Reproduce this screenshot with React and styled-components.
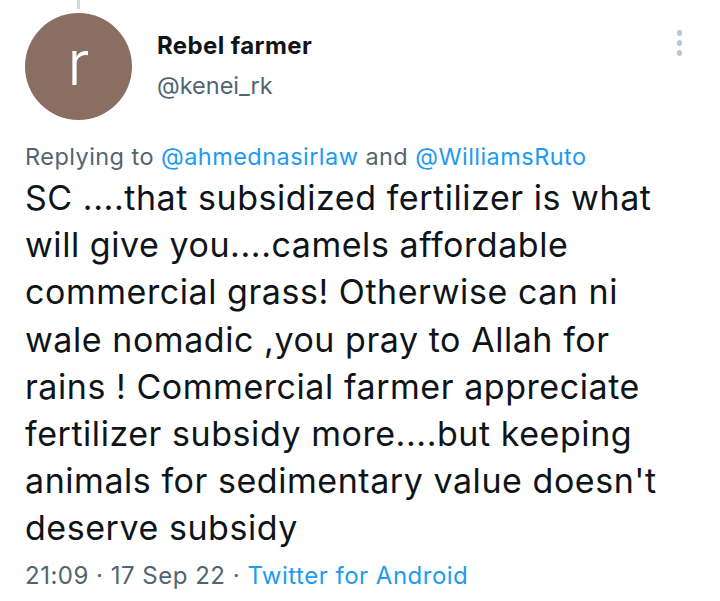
import styled, { createGlobalStyle } from "styled-components";

const Global = createGlobalStyle`
  body {
    margin: 0;
    background: #fff;
    font-family: Inter, "Liberation Sans", sans-serif;
  }
`;

const Tweet = styled.article`
  width: 720px;
  height: 601px;
  box-sizing: border-box;
  padding: 0 25px;
  color: #0f1419;
  overflow: hidden;
`;

const Header = styled.div`
  display: flex;
  align-items: flex-start;
`;

const AvatarCol = styled.div`
  display: flex;
  flex-direction: column;
  align-items: center;
  width: 107px;
`;

const ThreadLine = styled.div`
  width: 3px;
  height: 9px;
  background: #cfd9de;
  margin-bottom: 4px;
`;

const Avatar = styled.div`
  width: 107px;
  height: 107px;
  border-radius: 50%;
  background: #8b6e62;
  color: #fff;
  display: flex;
  align-items: center;
  justify-content: center;
  font-size: 62px;
  font-weight: 300;
  line-height: 1;
  padding-bottom: 8px;
  box-sizing: border-box;
`;

const Names = styled.div`
  display: flex;
  flex-direction: column;
  margin-left: 25px;
  padding-top: 32px;
  flex: 1;
`;

const Name = styled.div`
  font-weight: 700;
  font-size: 24px;
  letter-spacing: 0.4px;
  line-height: 28px;
`;

const Handle = styled.div`
  font-size: 23.5px;
  line-height: 28px;
  margin-top: 12px;
  color: #536471;
`;

const More = styled.div`
  display: flex;
  flex-direction: column;
  gap: 4.5px;
  padding-top: 30px;
  margin-right: 13px;
`;

const Dot = styled.span`
  width: 5.5px;
  height: 5.5px;
  border-radius: 50%;
  background: #b9c8d3;
`;

const Replying = styled.div`
  margin-top: 22px;
  font-size: 23.5px;
  letter-spacing: 0.45px;
  line-height: 30px;
  color: #536471;
`;

const Link = styled.span`
  color: #1d9bf0;
`;

const Body = styled.div`
  font-size: 34px;
  letter-spacing: 0.55px;
  line-height: 47.2px;
  margin-top: 2px;
  color: #0f1419;
`;

const Meta = styled.div`
  margin-top: 9px;
  font-size: 24px;
  letter-spacing: 0.5px;
  line-height: 30px;
  color: #536471;
`;

export default function App() {
  return (
    <>
      <Global />
      <Tweet>
        <Header>
          <AvatarCol>
            <ThreadLine />
            <Avatar>r</Avatar>
          </AvatarCol>
          <Names>
            <Name>Rebel farmer</Name>
            <Handle>@kenei_rk</Handle>
          </Names>
          <More>
            <Dot />
            <Dot />
            <Dot />
          </More>
        </Header>
        <Replying>
          Replying to <Link>@ahmednasirlaw</Link> and <Link>@WilliamsRuto</Link>
        </Replying>
        <Body>
          SC ....that subsidized fertilizer is what will give you....camels affordable
          commercial grass! Otherwise can ni wale nomadic ,you pray to Allah for rains !
          Commercial farmer appreciate fertilizer subsidy more....but keeping animals for
          sedimentary value doesn't deserve subsidy
        </Body>
        <Meta>
          21:09 · 17 Sep 22 · <Link>Twitter for Android</Link>
        </Meta>
      </Tweet>
    </>
  );
}
